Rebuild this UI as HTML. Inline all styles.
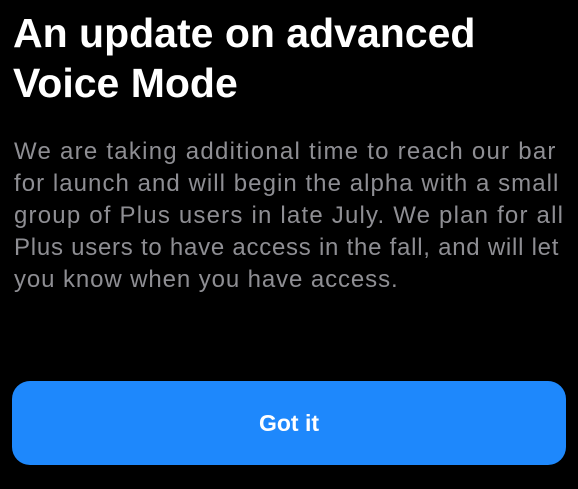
<!DOCTYPE html>
<html><head><style>
body{margin:0;width:578px;height:489px;background:#000;overflow:hidden;font-family:"Liberation Sans",sans-serif;position:relative}
.t{position:absolute;left:13px;color:#fff;font-weight:bold;font-size:41px;white-space:nowrap;line-height:50px}
.b{position:absolute;left:14px;color:#8e8e93;font-size:24px;letter-spacing:1.05px;white-space:nowrap;line-height:32px}
.btn{position:absolute;left:12px;top:381px;width:554px;height:84px;background:#1e88fc;border-radius:18px;color:#fff;font-weight:bold;font-size:23px;text-align:center;line-height:84px}
</style></head><body>
<div class="t" style="top:8px">An update on advanced<br>Voice Mode</div>
<div class="b" style="top:136px"><span style="letter-spacing:1.25px">We are taking additional time to reach our bar</span><br>for launch and will begin the alpha with a small<br><span style="letter-spacing:1.2px">group of Plus users in late July. We plan for all</span><br><span style="letter-spacing:0.75px">Plus users to have access in the fall, and will let</span><br><span style="letter-spacing:0.9px">you know when you have access.</span></div>
<div class="btn">Got it</div>
</body></html>
